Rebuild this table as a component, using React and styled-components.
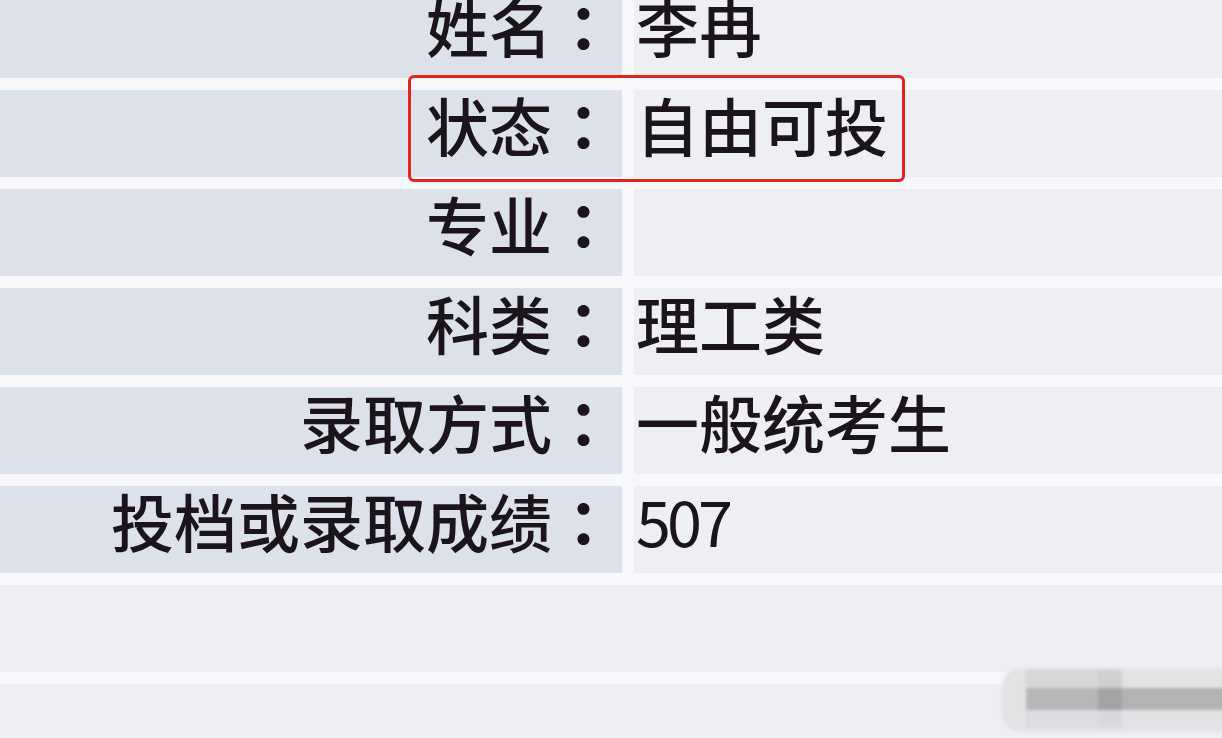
import React from 'react';
import styled, { createGlobalStyle } from 'styled-components';

const GlobalStyle = createGlobalStyle`
  html, body {
    margin: 0;
    padding: 0;
    background: #f8f8fb;
    overflow: hidden;
  }
  body {
    font-family: "Noto Sans CJK SC", "Noto Sans", sans-serif;
  }
`;

const rows = [
  { label: '姓名', value: '李冉' },
  { label: '状态', value: '自由可投', marked: true },
  { label: '专业', value: '' },
  { label: '科类', value: '理工类' },
  { label: '录取方式', value: '一般统考生' },
  { label: '投档或录取成绩', value: '507', digits: true },
];

const Page = styled.div`
  width: 1222px;
  height: 738px;
  overflow: hidden;
  position: relative;
`;

const Table = styled.div`
  display: flex;
  flex-direction: column;
  gap: 12px;
  margin-top: -9px;
`;

const Row = styled.div`
  position: relative;
  display: grid;
  grid-template-columns: 622px 1fr;
  grid-template-rows: 87px;
  column-gap: 12px;
  height: 87px;
  flex: none;
`;

const Cell = styled.div`
  display: flex;
  align-items: center;
  min-height: 0;
  font-size: 63px;
  line-height: 1;
  font-weight: 500;
  color: #1b151b;
  white-space: nowrap;
  padding-bottom: 20px;
  box-sizing: border-box;
`;

const Label = styled(Cell)`
  background: #dde1ea;
  justify-content: flex-end;
  padding-right: 7px;
`;

const Colon = styled.span`
  font-family: "Noto Sans CJK JP", "Noto Sans CJK SC", sans-serif;
  font-weight: 700;
`;

const Value = styled(Cell)`
  background: #eeeff2;
  padding-left: 2px;
  font-weight: ${(p) => (p.$digits ? 400 : 500)};
  letter-spacing: ${(p) => (p.$digits ? '-4px' : '0')};
`;

const EmptyRow = styled.div`
  flex: none;
  height: 87px;
  background: #eeeff2;
`;

const Marker = styled.div`
  position: absolute;
  left: 408px;
  top: -15px;
  width: 497px;
  height: 107px;
  box-sizing: border-box;
  border: 3.5px solid #e3231c;
  border-radius: 6px;
  pointer-events: none;
`;

const Watermark = styled.div`
  position: absolute;
  left: 1002px;
  top: 668px;
  width: 230px;
  height: 64px;
  padding: 2px 0 4px 24px;
  box-sizing: border-box;
  border-radius: 18px;
  background: #e2e3e5;
  filter: blur(1.5px);
  display: grid;
  grid-template-columns: 72px 24px 1fr;
  grid-template-rows: 18px 22px 1fr;
`;

const Block = styled.div`
  background: ${(p) => p.$c};
`;

export default function App() {
  return (
    <Page>
      <GlobalStyle />
      <Table>
        {rows.map((r) => (
          <Row key={r.label}>
            <Label>
              {r.label}
              <Colon>：</Colon>
            </Label>
            <Value $digits={r.digits}>{r.value}</Value>
            {r.marked && <Marker />}
          </Row>
        ))}
        <EmptyRow />
        <EmptyRow />
      </Table>
      <Watermark>
        <Block $c="#d6d7d9" />
        <Block $c="#cfd0d2" />
        <Block $c="transparent" />
        <Block $c="#b6b7b9" />
        <Block $c="#a2a3a5" />
        <Block $c="#b2b3b5" />
        <Block $c="#dcdde0" />
        <Block $c="#d8d9dc" />
        <Block $c="transparent" />
      </Watermark>
    </Page>
  );
}
